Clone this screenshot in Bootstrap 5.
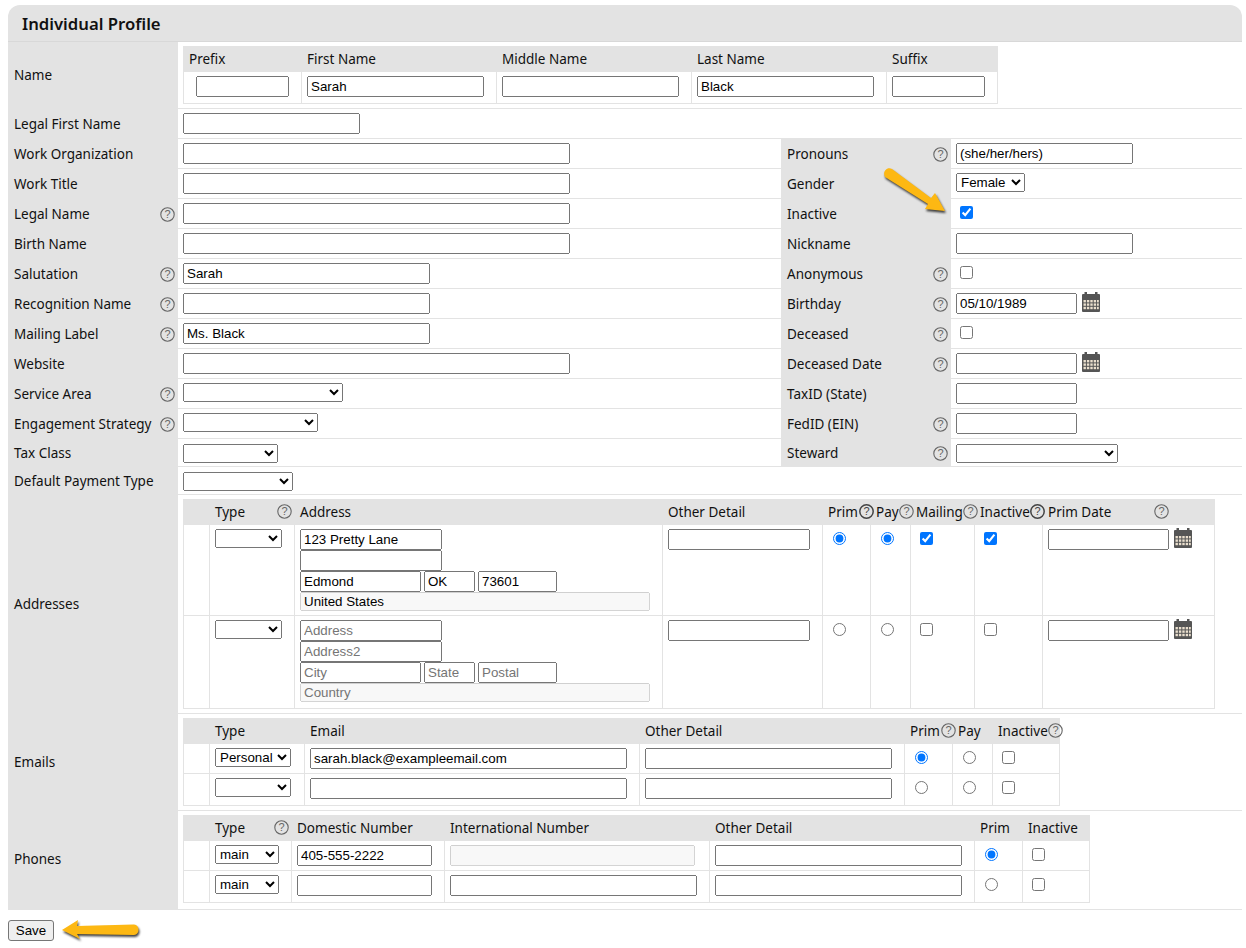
<!DOCTYPE html>
<html lang="en"><head><meta charset="utf-8"><title>Individual Profile</title>
<link href="https://cdn.jsdelivr.net/npm/bootstrap@5.3.0/dist/css/bootstrap.min.css" rel="stylesheet">
<style>
body{background:#fff;color:#111;font:13.5px/20px "Noto Sans",sans-serif}
.sheet{padding:5px 4px 0 8px;position:relative;width:1246px;height:948px;overflow:hidden}
.profile-card{border:0;border-radius:12px 12px 0 0}
.profile-card>.card-header{background:#e3e3e3;border:0;border-bottom:1px solid #d8d8d8;border-radius:12px 12px 0 0;height:37px;padding:7px 14px}
.ttl{font:600 16.7px/24px "Noto Sans",sans-serif;color:#111;margin:0}
.outer{table-layout:fixed;width:1234px;margin:0;border-collapse:collapse}
.outer>tbody>tr>td{padding:4px 0 4px 5px;border:0;border-bottom:1px solid #e3e3e3;vertical-align:top;box-shadow:none;color:#111;height:30px}
.outer>tbody>tr.short>td{height:28px;padding-top:5px;padding-bottom:3px}
.outer>tbody>tr>td.lab,.outer>tbody>tr.short>td.lab{background:#e3e3e3;padding:2px 3px 0 6px;vertical-align:middle}
.outer>tbody>tr.rname>td{height:66px;padding-bottom:2px}
.outer>tbody>tr.raddr>td{height:219px}
.outer>tbody>tr.rmail>td{height:97px}
.outer>tbody>tr.rphone>td{height:99px}
.outer>tbody>tr.raddr>td.lab,.outer>tbody>tr.rmail>td.lab{padding-top:0}
.outer>tbody>tr.rphone>td.lab{padding:0 3px 2px 6px}
.c170{width:170px}.c603{width:603px}.c291{width:291px}
.inner{table-layout:fixed;border-collapse:collapse;margin:0}
.tw814{width:814px}.tw1031{width:1031px}.tw876{width:876px}.tw906{width:906px}
.outer .inner>*>tr>*{border:1px solid #e3e3e3;padding:4px 5px;vertical-align:top;font-weight:400;color:#111;height:30px;line-height:20px;box-shadow:none}
.outer .inner>thead>tr>th{background:#e3e3e3;height:25px;padding:2px 5px;border-color:#e3e3e3;white-space:nowrap}
.outer .inner>tbody>tr.tall>td{height:90px}
.outer .inner>tbody>tr.taller>td{height:93px}
.outer .inner>tbody>tr.last>td{height:32px}
.outer .inner>tbody>tr.nrow>td{height:32px}
.nm1{width:118px}.nm2{width:195px}.nm3{width:111px}
.a1{width:26px}.a2{width:85px}.a3{width:368px}.a4{width:160px}.a5{width:48px}.a6{width:40px}.a7{width:64px}.a8{width:68px}.a9{width:172px}
.e2{width:95px}.e3{width:335px}.e4{width:265px}.e5{width:48px}.e6{width:40px}.e7{width:67px}
.p2{width:82px}.p3{width:153px}.p4{width:265px}.p5{width:265px}.p6{width:48px}.p7{width:67px}
.fld{display:block;height:21px;font:13.33px/15px "Liberation Sans",sans-serif;color:#000;margin:0}
.dd{display:block;height:19px;font:13.33px/17px "Liberation Sans",sans-serif;color:#000;margin:0;padding:0}
.i387{width:387px}.i177{width:177px}.i93{width:93px}.i247{width:247px}.i121{width:121px}.i142{width:142px}.i51{width:51px}.i79{width:79px}.i350{width:350px}.i135{width:135px}.i317{width:317px}.i245{width:245px}
.s160{width:160px}.s135{width:135px}.s95{width:95px}.s110{width:110px}.s162{width:162px}.s69{width:69px}.s67{width:67px}.s76{width:76px}.s64{width:64px}
.ctr{margin-left:7px}
.ck{display:block;margin:3px 0 0 4px}
.rb{display:block;margin:3px 0 0 5px}
.cty{height:19px}
.gapx{gap:3px}
.hicon{width:15px;height:15px;flex:none;display:block}
.hicon text{font:400 11px "Liberation Sans",sans-serif;fill:#666;text-anchor:middle}
.hicon circle{fill:none;stroke:#666;stroke-width:1.1}
.hicon.dark circle{stroke:#444;stroke-width:1.5}
.hicon.dark text{fill:#444}
.o3{margin-right:-3px}.o6{margin-right:-6px}.o7{margin-right:-7px}.o8{margin-right:-8px}.o9{margin-right:-9px}.o40{margin-right:40px}
.cal{width:18px;height:20px;flex:none;display:block;margin:-1px 0 0 1px}
.savebtn{display:block;width:46px;height:21px;margin-top:10px;padding:0;background:#efefef;border:1px solid #767676;border-radius:3px;color:#000;font:13.33px/19px "Liberation Sans",sans-serif}
.savebtn:hover{background:#e5e5e5;border-color:#767676;color:#000}
.arrow{position:absolute;left:0;top:0;pointer-events:none;filter:drop-shadow(1.5px 2px 1px rgba(0,0,0,.75))}
</style></head>
<body>
<svg width="0" height="0" class="d-block position-absolute">
<defs>
<symbol id="cl" viewBox="0 0 18 20">
<rect x="2.5" y="0" width="2.5" height="4" fill="#555"/><rect x="13" y="0" width="2.5" height="4" fill="#555"/>
<rect x="0" y="2" width="18" height="18" rx="1" fill="#555"/>
<g fill="#eadfce"><rect x="1.5" y="8" width="2.4" height="2.4"/><rect x="4.9" y="8" width="2.4" height="2.4"/><rect x="8.3" y="8" width="2.4" height="2.4"/><rect x="11.700" y="8" width="2.4" height="2.4"/><rect x="15" y="8" width="1.8" height="2.4"/>
<rect x="1.5" y="11.400" width="2.4" height="2.4"/><rect x="4.9" y="11.400" width="2.4" height="2.4"/><rect x="8.3" y="11.400" width="2.4" height="2.4"/><rect x="11.700" y="11.400" width="2.4" height="2.4"/><rect x="15" y="11.400" width="1.8" height="2.4"/>
<rect x="1.5" y="14.800" width="2.4" height="2.4"/><rect x="4.9" y="14.800" width="2.4" height="2.4"/><rect x="8.3" y="14.800" width="2.4" height="2.4"/><rect x="11.700" y="14.800" width="2.4" height="2.4"/><rect x="15" y="14.800" width="1.8" height="2.4"/></g>
</symbol>
</defs>
</svg>
<div class="sheet">
<div class="card profile-card">
<div class="card-header"><h1 class="ttl">Individual Profile</h1></div>
<table class="table outer"><colgroup><col class="c170"><col class="c603"><col class="c170"><col class="c291"></colgroup><tbody>
<tr class="rname"><td class="lab">Name</td><td colspan="3">
<table class="table inner tw814"><colgroup><col class="nm1"><col class="nm2"><col class="nm2"><col class="nm2"><col class="nm3"></colgroup>
<thead><tr><th>Prefix</th><th>First Name</th><th>Middle Name</th><th>Last Name</th><th>Suffix</th></tr></thead>
<tbody><tr class="nrow"><td><input class="fld i93 ctr" type="text"></td><td><input class="fld i177" type="text" value="Sarah"></td><td><input class="fld i177" type="text"></td><td><input class="fld i177" type="text" value="Black"></td><td><input class="fld i93" type="text"></td></tr></tbody></table>
</td></tr>
<tr><td class="lab">Legal First Name</td><td colspan="3"><input class="fld i177" type="text"></td></tr>
<tr><td class="lab">Work Organization</td><td><input class="fld i387" type="text"></td><td class="lab"><div class="d-flex justify-content-between align-items-center">Pronouns<svg class="hicon" viewBox="0 0 15 15"><circle cx="7.5" cy="7.5" r="6.7"/><text x="7.5" y="11.400">?</text></svg></div></td><td><input class="fld i177" type="text" value="(she/her/hers)"></td></tr>
<tr><td class="lab">Work Title</td><td><input class="fld i387" type="text"></td><td class="lab">Gender</td><td><select class="dd s69"><option>Female</option></select></td></tr>
<tr><td class="lab"><div class="d-flex justify-content-between align-items-center">Legal Name<svg class="hicon" viewBox="0 0 15 15"><circle cx="7.5" cy="7.5" r="6.7"/><text x="7.5" y="11.400">?</text></svg></div></td><td><input class="fld i387" type="text"></td><td class="lab">Inactive</td><td><input class="ck" type="checkbox" checked></td></tr>
<tr><td class="lab">Birth Name</td><td><input class="fld i387" type="text"></td><td class="lab">Nickname</td><td><input class="fld i177" type="text"></td></tr>
<tr><td class="lab"><div class="d-flex justify-content-between align-items-center">Salutation<svg class="hicon" viewBox="0 0 15 15"><circle cx="7.5" cy="7.5" r="6.7"/><text x="7.5" y="11.400">?</text></svg></div></td><td><input class="fld i247" type="text" value="Sarah"></td><td class="lab"><div class="d-flex justify-content-between align-items-center">Anonymous<svg class="hicon" viewBox="0 0 15 15"><circle cx="7.5" cy="7.5" r="6.7"/><text x="7.5" y="11.400">?</text></svg></div></td><td><input class="ck" type="checkbox"></td></tr>
<tr><td class="lab"><div class="d-flex justify-content-between align-items-center">Recognition Name<svg class="hicon" viewBox="0 0 15 15"><circle cx="7.5" cy="7.5" r="6.7"/><text x="7.5" y="11.400">?</text></svg></div></td><td><input class="fld i247" type="text"></td><td class="lab"><div class="d-flex justify-content-between align-items-center">Birthday<svg class="hicon" viewBox="0 0 15 15"><circle cx="7.5" cy="7.5" r="6.7"/><text x="7.5" y="11.400">?</text></svg></div></td><td><div class="d-flex gap-1"><input class="fld i121" type="text" value="05/10/1989"><svg class="cal"><use href="#cl"/></svg></div></td></tr>
<tr><td class="lab"><div class="d-flex justify-content-between align-items-center">Mailing Label<svg class="hicon" viewBox="0 0 15 15"><circle cx="7.5" cy="7.5" r="6.7"/><text x="7.5" y="11.400">?</text></svg></div></td><td><input class="fld i247" type="text" value="Ms. Black"></td><td class="lab"><div class="d-flex justify-content-between align-items-center">Deceased<svg class="hicon" viewBox="0 0 15 15"><circle cx="7.5" cy="7.5" r="6.7"/><text x="7.5" y="11.400">?</text></svg></div></td><td><input class="ck" type="checkbox"></td></tr>
<tr><td class="lab">Website</td><td><input class="fld i387" type="text"></td><td class="lab"><div class="d-flex justify-content-between align-items-center">Deceased Date<svg class="hicon" viewBox="0 0 15 15"><circle cx="7.5" cy="7.5" r="6.7"/><text x="7.5" y="11.400">?</text></svg></div></td><td><div class="d-flex gap-1"><input class="fld i121" type="text"><svg class="cal"><use href="#cl"/></svg></div></td></tr>
<tr><td class="lab"><div class="d-flex justify-content-between align-items-center">Service Area<svg class="hicon" viewBox="0 0 15 15"><circle cx="7.5" cy="7.5" r="6.7"/><text x="7.5" y="11.400">?</text></svg></div></td><td><select class="dd s160"><option></option></select></td><td class="lab">TaxID (State)</td><td><input class="fld i121" type="text"></td></tr>
<tr><td class="lab"><div class="d-flex justify-content-between align-items-center">Engagement Strategy<svg class="hicon" viewBox="0 0 15 15"><circle cx="7.5" cy="7.5" r="6.7"/><text x="7.5" y="11.400">?</text></svg></div></td><td><select class="dd s135"><option></option></select></td><td class="lab"><div class="d-flex justify-content-between align-items-center">FedID (EIN)<svg class="hicon" viewBox="0 0 15 15"><circle cx="7.5" cy="7.5" r="6.7"/><text x="7.5" y="11.400">?</text></svg></div></td><td><input class="fld i121" type="text"></td></tr>
<tr class="short"><td class="lab">Tax Class</td><td><select class="dd s95"><option></option></select></td><td class="lab"><div class="d-flex justify-content-between align-items-center">Steward<svg class="hicon" viewBox="0 0 15 15"><circle cx="7.5" cy="7.5" r="6.7"/><text x="7.5" y="11.400">?</text></svg></div></td><td><select class="dd s162"><option></option></select></td></tr>
<tr class="short"><td class="lab">Default Payment Type</td><td colspan="3"><select class="dd s110"><option></option></select></td></tr>

<tr class="raddr"><td class="lab">Addresses</td><td colspan="3">
<table class="table inner tw1031"><colgroup><col class="a1"><col class="a2"><col class="a3"><col class="a4"><col class="a5"><col class="a6"><col class="a7"><col class="a8"><col class="a9"></colgroup>
<thead><tr><th></th>
<th><div class="d-flex justify-content-between align-items-center">Type<svg class="hicon o3" viewBox="0 0 15 15"><circle cx="7.5" cy="7.5" r="6.7"/><text x="7.5" y="11.400">?</text></svg></div></th>
<th>Address</th><th>Other Detail</th>
<th><div class="d-flex justify-content-between align-items-center">Prim<svg class="hicon dark o9" viewBox="0 0 15 15"><circle cx="7.5" cy="7.5" r="6.7"/><text x="7.5" y="11.400">?</text></svg></div></th>
<th><div class="d-flex justify-content-between align-items-center">Pay<svg class="hicon o6" viewBox="0 0 15 15"><circle cx="7.5" cy="7.5" r="6.7"/><text x="7.5" y="11.400">?</text></svg></div></th>
<th><div class="d-flex justify-content-between align-items-center">Mailing<svg class="hicon o8" viewBox="0 0 15 15"><circle cx="7.5" cy="7.5" r="6.7"/><text x="7.5" y="11.400">?</text></svg></div></th>
<th><div class="d-flex justify-content-between align-items-center">Inactive<svg class="hicon dark o7" viewBox="0 0 15 15"><circle cx="7.5" cy="7.5" r="6.7"/><text x="7.5" y="11.400">?</text></svg></div></th>
<th><div class="d-flex justify-content-between align-items-center">Prim Date<svg class="hicon o40" viewBox="0 0 15 15"><circle cx="7.5" cy="7.5" r="6.7"/><text x="7.5" y="11.400">?</text></svg></div></th></tr></thead>
<tbody>
<tr class="tall"><td></td><td><select class="dd s67"><option></option></select></td>
<td><input class="fld i142" type="text" value="123 Pretty Lane"><input class="fld i142" type="text"><div class="d-flex gapx"><input class="fld i121" type="text" value="Edmond"><input class="fld i51" type="text" value="OK"><input class="fld i79" type="text" value="73601"></div><input class="fld i350 cty" type="text" value="United States" disabled></td>
<td><input class="fld i142" type="text"></td><td><input class="rb" type="radio" checked></td><td><input class="rb" type="radio" checked></td><td><input class="ck" type="checkbox" checked></td><td><input class="ck" type="checkbox" checked></td>
<td><div class="d-flex gap-1"><input class="fld i121" type="text"><svg class="cal"><use href="#cl"/></svg></div></td></tr>
<tr class="taller"><td></td><td><select class="dd s67"><option></option></select></td>
<td><input class="fld i142" type="text" placeholder="Address"><input class="fld i142" type="text" placeholder="Address2"><div class="d-flex gapx"><input class="fld i121" type="text" placeholder="City"><input class="fld i51" type="text" placeholder="State"><input class="fld i79" type="text" placeholder="Postal"></div><input class="fld i350 cty" type="text" placeholder="Country" disabled></td>
<td><input class="fld i142" type="text"></td><td><input class="rb" type="radio"></td><td><input class="rb" type="radio"></td><td><input class="ck" type="checkbox"></td><td><input class="ck" type="checkbox"></td>
<td><div class="d-flex gap-1"><input class="fld i121" type="text"><svg class="cal"><use href="#cl"/></svg></div></td></tr>
</tbody></table>
</td></tr>

<tr class="rmail"><td class="lab">Emails</td><td colspan="3">
<table class="table inner tw876"><colgroup><col class="a1"><col class="e2"><col class="e3"><col class="e4"><col class="e5"><col class="e6"><col class="e7"></colgroup>
<thead><tr><th></th><th>Type</th><th>Email</th><th>Other Detail</th>
<th><div class="d-flex justify-content-between align-items-center">Prim<svg class="hicon o9" viewBox="0 0 15 15"><circle cx="7.5" cy="7.5" r="6.7"/><text x="7.5" y="11.400">?</text></svg></div></th><th>Pay</th>
<th><div class="d-flex justify-content-between align-items-center">Inactive<svg class="hicon o8" viewBox="0 0 15 15"><circle cx="7.5" cy="7.5" r="6.7"/><text x="7.5" y="11.400">?</text></svg></div></th></tr></thead>
<tbody>
<tr><td></td><td><select class="dd s76"><option>Personal</option></select></td><td><input class="fld i317" type="text" value="sarah.black@exampleemail.com"></td><td><input class="fld i247" type="text"></td><td><input class="rb" type="radio" checked></td><td><input class="rb" type="radio"></td><td><input class="ck" type="checkbox"></td></tr>
<tr class="last"><td></td><td><select class="dd s76"><option></option></select></td><td><input class="fld i317" type="text"></td><td><input class="fld i247" type="text"></td><td><input class="rb" type="radio"></td><td><input class="rb" type="radio"></td><td><input class="ck" type="checkbox"></td></tr>
</tbody></table>
</td></tr>

<tr class="rphone"><td class="lab">Phones</td><td colspan="3">
<table class="table inner tw906"><colgroup><col class="a1"><col class="p2"><col class="p3"><col class="p4"><col class="p5"><col class="p6"><col class="p7"></colgroup>
<thead><tr><th></th><th><div class="d-flex justify-content-between align-items-center">Type<svg class="hicon o3" viewBox="0 0 15 15"><circle cx="7.5" cy="7.5" r="6.7"/><text x="7.5" y="11.400">?</text></svg></div></th><th>Domestic Number</th><th>International Number</th><th>Other Detail</th><th>Prim</th><th>Inactive</th></tr></thead>
<tbody>
<tr><td></td><td><select class="dd s64"><option>main</option></select></td><td><input class="fld i135" type="text" value="405-555-2222"></td><td><input class="fld i245" type="text" disabled></td><td><input class="fld i247" type="text"></td><td><input class="rb" type="radio" checked></td><td><input class="ck" type="checkbox"></td></tr>
<tr class="last"><td></td><td><select class="dd s64"><option>main</option></select></td><td><input class="fld i135" type="text"></td><td><input class="fld i247" type="text"></td><td><input class="fld i247" type="text"></td><td><input class="rb" type="radio"></td><td><input class="ck" type="checkbox"></td></tr>
</tbody></table>
</td></tr>
</tbody></table>
</div>
<button class="btn savebtn" type="button">Save</button>
<svg class="arrow" width="1246" height="948" viewBox="0 0 1246 948">
<path fill="#fdb813" d="M885 177 C882 172 887 166 892 169 L931 198 L935 193 L945 211 L925 209 L928 204 Z"/>
<path fill="#fdb813" d="M62 930 L78 920 L77 926 L134 924.500 C140 924.500 140 935 134 935 L77 934 L80 939 Z"/>
</svg>
</div>
</body></html>
